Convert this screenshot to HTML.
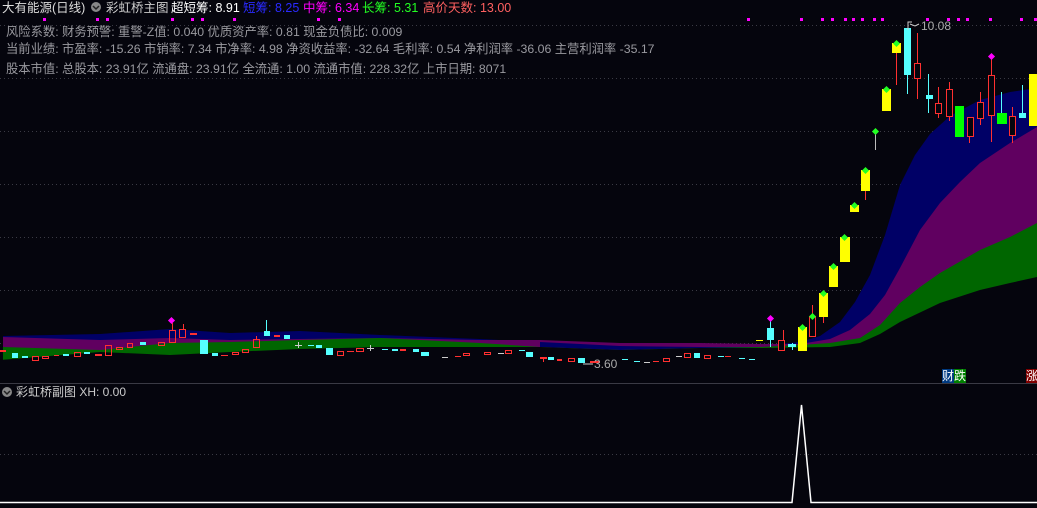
<!DOCTYPE html>
<html><head><meta charset="utf-8"><style>
html,body{margin:0;padding:0;background:#05050d;width:1037px;height:508px;overflow:hidden;position:relative;font-family:"Liberation Sans","Noto Sans CJK SC",sans-serif}
.t{position:absolute;white-space:nowrap;font-size:12px;line-height:14px}
.h{font-size:12.5px}
.g{color:#9a9aa0;font-size:12.3px}
svg{position:absolute;left:0;top:0}
</style></head><body>
<svg width="1037" height="508" viewBox="0 0 1037 508">
<g stroke="#3a3a44" stroke-dasharray="1 3" stroke-width="1">
<line x1="0" y1="25.5" x2="1037" y2="25.5"/><line x1="0" y1="78.5" x2="1037" y2="78.5"/>
<line x1="0" y1="131.5" x2="1037" y2="131.5"/><line x1="0" y1="184.5" x2="1037" y2="184.5"/>
<line x1="0" y1="237.5" x2="1037" y2="237.5"/><line x1="0" y1="290.5" x2="1037" y2="290.5"/>
<line x1="0" y1="343.5" x2="1037" y2="343.5"/><line x1="0" y1="454.5" x2="1037" y2="454.5"/>
</g>
<!-- bands -->
<polygon fill="#000066" points="3,336 100,334 170,329 230,333 300,331 380,335 480,339 540,342 620,346 700,346 760,346 800,342 820,336 840,322 855,302 870,275 885,235 900,185 915,155 930,134 950,116 980,100 1010,92 1037,88 1037,383 3,383"/>
<polygon fill="#600060" points="3,337 100,340 170,338 230,340 300,339 380,338 480,340 540,340 620,343 700,343 760,344 800,344 830,339 850,330 870,314 885,295 900,268 920,230 940,203 960,182 980,163 1010,143 1037,127 1037,383 3,383"/>
<polygon fill="#000066" points="540,342 620,346 700,347 760,347 760,348 700,348 620,350 540,347"/>
<polygon fill="#006600" points="3,347 100,350 170,343 230,342 300,340 380,338 480,343 540,347 620,350 700,348 760,347 800,345 830,343 860,338 880,325 900,303 920,287 940,273 980,250 1010,237 1037,223 1037,383 3,383"/>
<polygon fill="#05050d" points="0,360 100,352 170,355 230,352 300,349 380,347 480,347 540,347 620,350 700,348 760,348 830,347 860,343 880,334 900,322 940,303 980,290 1010,283 1037,277 1037,383 0,383"/>
<line x1="0" y1="383.5" x2="1037" y2="383.5" stroke="#3a3a44"/>
<!-- magenta dots -->
<g fill="#ff00ff">
<rect x="43" y="18" width="3" height="3"/><rect x="96" y="18" width="3" height="3"/><rect x="106" y="18" width="3" height="3"/><rect x="171" y="18" width="3" height="3"/><rect x="191" y="18" width="3" height="3"/><rect x="201" y="18" width="3" height="3"/><rect x="233" y="18" width="3" height="3"/><rect x="317" y="18" width="3" height="3"/><rect x="338" y="18" width="3" height="3"/>
<rect x="747" y="18" width="3" height="3"/><rect x="800" y="18" width="3" height="3"/><rect x="821" y="18" width="3" height="3"/><rect x="831" y="18" width="3" height="3"/><rect x="844" y="18" width="3" height="3"/><rect x="852" y="18" width="3" height="3"/><rect x="861" y="18" width="3" height="3"/><rect x="873" y="18" width="3" height="3"/><rect x="881" y="18" width="3" height="3"/><rect x="926" y="18" width="3" height="3"/><rect x="947" y="18" width="3" height="3"/><rect x="957" y="18" width="3" height="3"/><rect x="966" y="18" width="3" height="3"/><rect x="989" y="18" width="3" height="3"/><rect x="1020" y="18" width="3" height="3"/><rect x="1034" y="18" width="3" height="3"/>
</g>
<!-- left candles -->
<g>
<rect x="0" y="350" width="6" height="2" fill="#ff3030"/>
<rect x="12" y="353" width="6" height="5" fill="#55ffff"/><rect x="22" y="356" width="6" height="2" fill="#55ffff"/>
<g fill="none" stroke="#ff3030"><rect x="32.5" y="356.5" width="6" height="4"/><rect x="42.5" y="356.5" width="6" height="2"/><rect x="74.5" y="352.5" width="6" height="4"/><rect x="105.5" y="345.5" width="6" height="10"/><rect x="116.5" y="347.5" width="6" height="2"/><rect x="127.5" y="343.5" width="5" height="4"/><rect x="158.5" y="342.5" width="6" height="3"/><rect x="169.5" y="330.5" width="6" height="12"/><rect x="179.5" y="329.5" width="6" height="8"/><rect x="232.5" y="352.5" width="6" height="2"/><rect x="242.5" y="349.5" width="6" height="3"/><rect x="253.5" y="339.5" width="6" height="8"/><rect x="337.5" y="351.5" width="6" height="4"/><rect x="356.5" y="348.5" width="7" height="3"/><rect x="463.5" y="353.5" width="6" height="2"/><rect x="484.5" y="352.5" width="6" height="2"/><rect x="505.5" y="350.5" width="6" height="3"/><rect x="568.5" y="358.5" width="6" height="3"/><rect x="663.5" y="358.5" width="6" height="3"/><rect x="684.5" y="353.5" width="6" height="4"/><rect x="704.5" y="355.5" width="6" height="3"/></g>
<g fill="#ff3030"><rect x="54" y="355" width="5" height="1"/><rect x="95" y="354" width="7" height="2"/><rect x="190" y="333" width="7" height="2"/><rect x="221" y="355" width="7" height="1"/><rect x="274" y="335" width="6" height="2"/><rect x="347" y="351" width="7" height="1"/><rect x="400" y="349" width="6" height="2"/><rect x="455" y="356" width="6" height="1"/><rect x="540" y="357" width="7" height="2"/><rect x="557" y="359" width="5" height="2"/><rect x="590" y="361" width="10" height="2"/><rect x="653" y="361" width="6" height="1"/><rect x="725" y="356" width="6" height="1"/>
<rect x="172" y="323" width="1" height="7"/><rect x="183" y="324" width="1" height="5"/><rect x="256" y="336" width="1" height="3"/><rect x="543" y="359" width="1" height="3"/></g>
<g fill="#55ffff"><rect x="63" y="354" width="6" height="2"/><rect x="84" y="352" width="6" height="2"/><rect x="140" y="342" width="6" height="3"/><rect x="200" y="340" width="8" height="14"/><rect x="212" y="353" width="6" height="3"/><rect x="264" y="331" width="6" height="5"/><rect x="266" y="320" width="1" height="11"/><rect x="284" y="335" width="6" height="4"/><rect x="308" y="345" width="6" height="1"/><rect x="316" y="345" width="6" height="3"/><rect x="326" y="348" width="7" height="7"/><rect x="382" y="349" width="6" height="1"/><rect x="392" y="349" width="6" height="2"/><rect x="413" y="349" width="6" height="3"/><rect x="421" y="352" width="8" height="4"/><rect x="519" y="350" width="6" height="1"/><rect x="526" y="352" width="7" height="5"/><rect x="548" y="357" width="6" height="3"/><rect x="578" y="358" width="7" height="5"/><rect x="622" y="359" width="6" height="1"/><rect x="634" y="361" width="6" height="1"/><rect x="694" y="353" width="6" height="5"/><rect x="718" y="356" width="6" height="1"/><rect x="739" y="358" width="6" height="1"/><rect x="749" y="359" width="6" height="1"/></g>
<g fill="#cccccc"><rect x="295" y="345" width="7" height="1"/><rect x="298" y="342" width="1" height="6"/><rect x="367" y="348" width="7" height="1"/><rect x="370" y="345" width="1" height="6"/><rect x="442" y="357" width="6" height="1"/><rect x="498" y="353" width="6" height="1"/><rect x="644" y="362" width="6" height="1"/><rect x="676" y="356" width="6" height="1"/></g>
<rect x="169" y="318" width="5" height="5" fill="#ff00ff" transform="rotate(45 171.5 320.5)"/>
<rect x="756" y="340" width="7" height="1" fill="#ffff00"/>
<line x1="583" y1="364" x2="593" y2="364" stroke="#ccc"/>
</g>
<!-- right candles -->
<g fill="#ffff00"><rect x="798" y="327" width="9" height="24"/><rect x="819" y="293" width="9" height="24"/><rect x="829" y="266" width="9" height="21"/><rect x="840" y="237" width="10" height="25"/><rect x="850" y="205" width="9" height="7"/><rect x="861" y="170" width="9" height="21"/><rect x="882" y="89" width="9" height="22"/><rect x="892" y="43" width="9" height="10"/><rect x="1029" y="74" width="8" height="52"/></g>
<g stroke="#ff3030" stroke-width="1"><line x1="823.5" y1="317" x2="823.5" y2="323"/><line x1="865.5" y1="191" x2="865.5" y2="200"/><line x1="896.5" y1="53" x2="896.5" y2="85"/><line x1="783.5" y1="330" x2="783.5" y2="351"/><line x1="812.5" y1="305" x2="812.5" y2="337"/><line x1="917.5" y1="33" x2="917.5" y2="99"/><line x1="938.5" y1="87" x2="938.5" y2="118"/><line x1="949.5" y1="82" x2="949.5" y2="121"/><line x1="969.5" y1="117" x2="969.5" y2="143"/><line x1="980.5" y1="92" x2="980.5" y2="125"/><line x1="991.5" y1="58" x2="991.5" y2="142"/><line x1="1012.5" y1="107" x2="1012.5" y2="143"/></g>
<g fill="#05050d" stroke="#ff3030"><rect x="778.5" y="340.5" width="6" height="10"/><rect x="809.5" y="316.5" width="6" height="20"/><rect x="914.5" y="63.5" width="6" height="15"/><rect x="935.5" y="103.5" width="6" height="10"/><rect x="946.5" y="89.5" width="6" height="27"/><rect x="967.5" y="117.5" width="6" height="19"/><rect x="977.5" y="102.5" width="6" height="16"/><rect x="988.5" y="75.5" width="6" height="40"/><rect x="1009.5" y="116.5" width="6" height="19"/></g>
<g stroke="#55ffff"><line x1="770.5" y1="320" x2="770.5" y2="347"/><line x1="907.5" y1="28" x2="907.5" y2="94"/><line x1="928.5" y1="74" x2="928.5" y2="113"/><line x1="1001.5" y1="92" x2="1001.5" y2="124"/><line x1="1022.5" y1="85" x2="1022.5" y2="118"/><line x1="792.5" y1="343" x2="792.5" y2="350"/></g>
<g fill="#55ffff"><rect x="767" y="328" width="7" height="12"/><rect x="788" y="344" width="8" height="3"/><rect x="904" y="28" width="7" height="47"/><rect x="926" y="95" width="7" height="4"/><rect x="1019" y="113" width="7" height="5"/></g>
<g fill="#00ff00"><rect x="955" y="106" width="9" height="31"/><rect x="997" y="113" width="10" height="11"/></g>
<line x1="875.5" y1="131" x2="875.5" y2="150" stroke="#bbb"/>
<g fill="#22ff22"><rect x="800" y="325" width="5" height="5" transform="rotate(45 802.5 327.5)"/><rect x="810" y="314" width="5" height="5" transform="rotate(45 812.5 316.5)"/><rect x="821" y="291" width="5" height="5" transform="rotate(45 823.5 293.5)"/><rect x="831" y="264" width="5" height="5" transform="rotate(45 833.5 266.5)"/><rect x="842" y="235" width="5" height="5" transform="rotate(45 844.5 237.5)"/><rect x="852" y="203" width="5" height="5" transform="rotate(45 854.5 205.5)"/><rect x="863" y="168" width="5" height="5" transform="rotate(45 865.5 170.5)"/><rect x="873" y="129" width="5" height="5" transform="rotate(45 875.5 131.5)"/><rect x="884" y="87" width="5" height="5" transform="rotate(45 886.5 89.5)"/><rect x="894" y="41" width="5" height="5" transform="rotate(45 896.5 43.5)"/></g>
<g fill="#ff00ff"><rect x="768" y="316" width="5" height="5" transform="rotate(45 770.5 318.5)"/><rect x="989" y="54" width="5" height="5" transform="rotate(45 991.5 56.5)"/></g>
<path d="M908 30 V22 H912 M910 24 L915 26 L919 24" stroke="#ccc" fill="none"/>
<!-- sub chart -->
<polyline points="0,502.5 792,502.5 801.5,405 811,502.5 1037,502.5" fill="none" stroke="#ffffff" stroke-width="1.5"/>
<circle cx="96" cy="7" r="5" fill="#888"/><path d="M93 6 L96 9 L99 6" stroke="#222" fill="none" stroke-width="1.5"/>
<circle cx="7" cy="392" r="5" fill="#888"/><path d="M4 391 L7 394 L10 391" stroke="#222" fill="none" stroke-width="1.5"/>
</svg>
<div class="t h" style="left:2px;top:1px;color:#ddd">大有能源(日线)</div>
<div class="t h" style="left:106px;top:1px;color:#ccc">彩虹桥主图</div>
<div class="t h" style="left:171px;top:1px;color:#fff">超短筹: 8.91</div>
<div class="t h" style="left:243px;top:1px;color:#2a2aff">短筹: 8.25</div>
<div class="t h" style="left:303px;top:1px;color:#ff00ff">中筹: 6.34</div>
<div class="t h" style="left:362px;top:1px;color:#22ff22">长筹: 5.31</div>
<div class="t h" style="left:423px;top:1px;color:#ff6060">高价天数: 13.00</div>
<div class="t g" style="left:6px;top:25px">风险系数: 财务预警: 重警-Z值: 0.040 优质资产率: 0.81 现金负债比: 0.009</div>
<div class="t g" style="left:6px;top:42px">当前业绩: 市盈率: -15.26 市销率: 7.34 市净率: 4.98 净资收益率: -32.64 毛利率: 0.54 净利润率 -36.06 主营利润率 -35.17</div>
<div class="t g" style="left:6px;top:62px">股本市值: 总股本: 23.91亿 流通盘: 23.91亿 全流通: 1.00 流通市值: 228.32亿 上市日期: 8071</div>
<div class="t" style="left:921px;top:19px;color:#aaa">10.08</div>
<div class="t" style="left:594px;top:357px;color:#aaa">3.60</div>
<div class="t" style="left:942px;top:369px;color:#fff"><span style="background:#003a80">财</span><span style="background:#008000">跌</span></div>
<div class="t" style="left:1026px;top:369px;color:#fff;background:#800000">涨</div>
<div class="t" style="left:16px;top:385px;color:#ccc">彩虹桥副图 XH: 0.00</div>
</body></html>
